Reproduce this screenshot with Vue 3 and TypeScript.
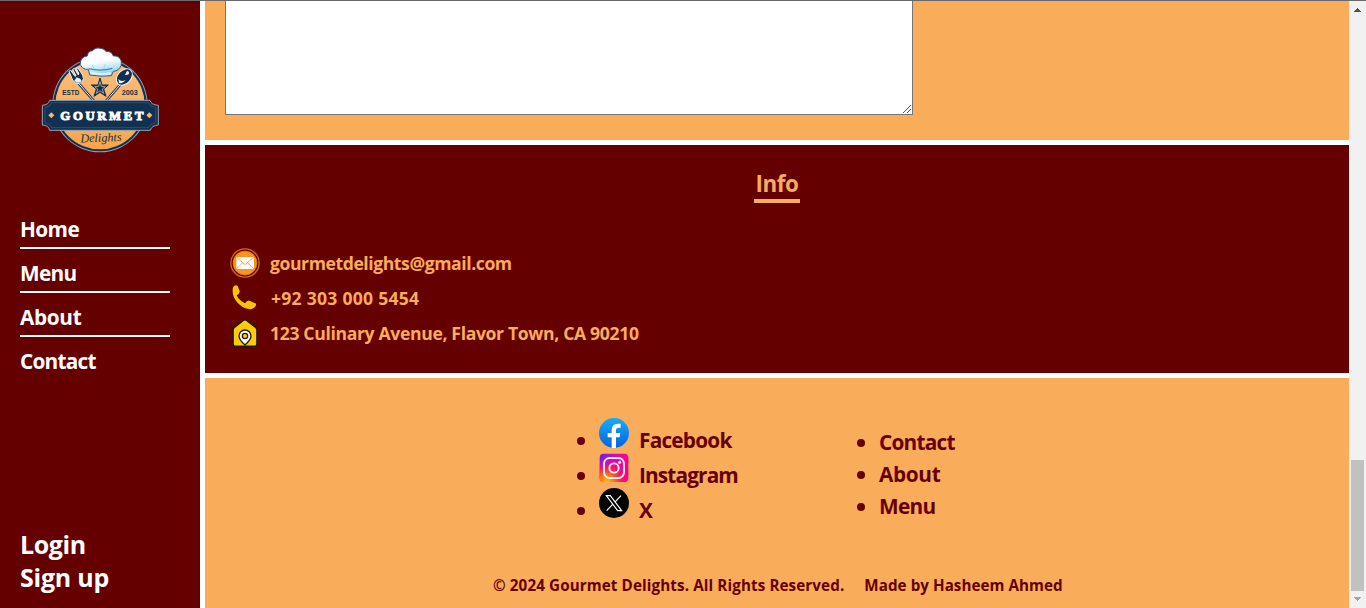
<script setup lang="ts">
interface FooterLink {
  label: string
  icon?: 'facebook' | 'instagram' | 'x'
}

const navItems: string[] = ['Home', 'Menu', 'About', 'Contact']
const socials: FooterLink[] = [
  { label: 'Facebook', icon: 'facebook' },
  { label: 'Instagram', icon: 'instagram' },
  { label: 'X', icon: 'x' },
]
const siteLinks: FooterLink[] = [{ label: 'Contact' }, { label: 'About' }, { label: 'Menu' }]
</script>

<template>
  <div class="page">
    <aside class="sidebar">
      <svg class="logo" viewBox="0 0 390 360" role="img" aria-label="Gourmet Delights">
        <defs>
          <linearGradient id="plate" x1="0" y1="0" x2="0" y2="1">
            <stop offset="0" stop-color="#fbbd7c" />
            <stop offset="1" stop-color="#f8a54c" />
          </linearGradient>
          <linearGradient id="hat" x1="0" y1="0" x2="0.25" y2="1">
            <stop offset="0.55" stop-color="#ffffff" />
            <stop offset="1" stop-color="#8fd3f0" />
          </linearGradient>
        </defs>
        <circle cx="195" cy="194" r="143" fill="#8fa3b5" />
        <circle cx="195" cy="194" r="140" fill="#12304f" />
        <circle cx="195" cy="194" r="134" fill="url(#plate)" />
        <g stroke="#12304f" stroke-width="8" stroke-linecap="round">
          <path d="M131 130 L176 182 M259 130 L214 182" />
          <path d="M132 131 L176 182 M258 131 L214 182" stroke="#eef3f7" stroke-width="3" />
        </g>
        <path d="M102 94 L107 91 L120 109 L123 107 L113 88 L118 85 L129 104 L132 102 L124 85 L129 84 L143 105 Q148 116 142 125 Q134 136 122 129 Q111 122 109 111Z" fill="#12304f" stroke="#f3f6f9" stroke-width="3" />
        <path d="M125 112 Q138 115 140 124 Q130 134 118 122Z" fill="#e9f1f7" />
        <ellipse cx="268" cy="111" rx="20" ry="28" transform="rotate(43 268 111)" fill="#12304f" stroke="#f3f6f9" stroke-width="3" />
        <path d="M250 117 Q258 127 272 120 Q262 134 252 128Z" fill="#eef3f7" />
        <path d="M276 93 Q285 94 281 103 Q274 107 270 104Z" fill="#eef3f7" />
        <path d="M142 83 Q132 75 137 63 Q142 49 157 48 Q158 33 173 32 Q181 21 196 25 Q208 26 213 34 Q231 34 235 48 Q252 46 258 61 Q263 78 249 89 Q244 94 235 94 L229 107 Q197 111 164 105 L160 88 Q151 90 142 83Z" fill="url(#hat)" stroke="#2b5f86" stroke-width="3" />
        <path d="M161 86 Q197 95 232 85" fill="none" stroke="#3c90bb" stroke-width="4" />
        <path d="M172 74 L177 86 M211 73 L206 87" fill="none" stroke="#9fd6ee" stroke-width="3" />
        <path d="M165 94 Q198 103 228 95 L226 104 Q196 108 167 103Z" fill="#d8f2fc" />
        <path d="M195 114 L201 135 L220 135 L206 147 L213 169 L195 157 L177 169 L184 147 L169 135 L189 135Z" fill="#12304f" stroke="#12304f" stroke-width="3" />
        <path d="M195 125 L199 139 L211 140 L202 147 L206 160 L195 152 L184 160 L188 147 L179 140 L191 139Z" fill="#12304f" stroke="#e8d5bd" stroke-width="2" />
        <text x="82" y="165" class="mark-small" textLength="51" lengthAdjust="spacingAndGlyphs">ESTD</text>
        <text x="260" y="165" class="mark-small" textLength="48" lengthAdjust="spacingAndGlyphs">2003</text>
        <path d="M44 181 H345 Q348 194 370 196 V255 Q350 256 346 271 H44 Q41 256 22 255 V196 Q41 194 44 181Z" fill="#12304f" stroke="#93a6b8" stroke-width="3" />
        <path d="M50 188 H340 Q345 201 362 203 V248 Q345 250 340 263 H50 Q46 250 30 248 V203 Q46 201 50 188Z" fill="none" stroke="#4d6c8b" stroke-width="1.5" />
        <text x="76" y="240" class="mark-name" textLength="249">GOURMET</text>
        <path d="M49 217 L58 226 L49 235 L40 226Z M343 217 L352 226 L343 235 L334 226Z" fill="#f9b66f" />
        <text x="136" y="305" class="mark-script" textLength="124" lengthAdjust="spacingAndGlyphs" transform="rotate(-2 198 300)">Delights</text>
      </svg>
      <nav class="nav">
        <a v-for="item in navItems" :key="item" class="nav-link"><span :class="['t-' + item.toLowerCase()]">{{ item }}</span></a>
      </nav>
      <div class="account">
        <a class="login">Login</a>
        <a class="signup">Sign up</a>
      </div>
    </aside>

    <main class="content">
      <section class="message">
        <div class="textarea">
          <svg class="grip" viewBox="0 0 10 10" shape-rendering="crispEdges">
            <path d="M1 8h1v1h-1z M2 7h1v1h-1z M3 6h1v1h-1z M4 5h1v1h-1z M5 4h1v1h-1z M6 3h1v1h-1z M7 2h1v1h-1z M8 1h1v1h-1z M5 8h1v1h-1z M6 7h1v1h-1z M7 6h1v1h-1z M8 5h1v1h-1z" fill="#55555a" />
          </svg>
        </div>
      </section>

      <section class="info">
        <h2 class="info-title"><span>Info</span></h2>
        <div class="contact-row">
          <svg class="icon" viewBox="0 0 90 90">
            <circle cx="45" cy="45" r="42.5" fill="#650000" stroke="#c97016" stroke-width="4" />
            <circle cx="45" cy="45" r="36" fill="#f7941d" stroke="#d97a16" stroke-width="2" />
            <rect x="19" y="27" width="53" height="36" rx="2" fill="#fff" />
            <path d="M20 28 L45 50 L71 28 M20 62 L38 44 M71 62 L52 44" fill="none" stroke="#f7a64a" stroke-width="3" />
          </svg>
          <span class="mail">gourmetdelights@gmail.com</span>
        </div>
        <div class="contact-row">
          <svg class="icon" viewBox="0 0 90 90">
            <path d="M10 11 Q18 4 23 9 L29 24 Q30 31 20 37 Q26 51 45 61 Q52 51 58 53 L76 61 Q81 65 74 73 Q68 80 57 78 Q34 74 20 56 Q7 39 8 22 Q8 14 10 11Z" fill="#ffc107" />
          </svg>
          <span class="phone">+92 303 000 5454</span>
        </div>
        <div class="contact-row">
          <svg class="icon" viewBox="0 0 90 90">
            <path d="M40 7 Q45 3 50 7 L77 28 Q81 31 81 36 V78 Q81 85 74 85 H16 Q9 85 9 78 V36 Q9 31 13 28Z" fill="#ffcb05" stroke="#251710" stroke-width="5" />
            <path d="M45 81 Q27 65 27 54 A18 18 0 0 1 63 54 Q63 65 45 81Z" fill="#fff" stroke="#251710" stroke-width="4" />
            <circle cx="45" cy="54" r="8" fill="#ffcb05" stroke="#251710" stroke-width="4" />
          </svg>
          <span class="address">123 Culinary Avenue, Flavor Town, CA 90210</span>
        </div>
      </section>

      <footer class="footer">
        <div class="footer-lists">
          <ul class="list socials">
            <li v-for="link in socials" :key="link.label">
              <i class="dot"></i>
              <svg v-if="link.icon === 'facebook'" class="icon" viewBox="0 0 90 90">
                <defs>
                  <linearGradient id="fb" x1="0" y1="0" x2="0" y2="1">
                    <stop offset="0" stop-color="#18acfe" />
                    <stop offset="1" stop-color="#0163e0" />
                  </linearGradient>
                </defs>
                <circle cx="45" cy="45" r="45" fill="url(#fb)" />
                <path d="M38 90 V58 H26 V45 H38 V36 Q38 17 57 17 H65 V29 H59 Q51 29 51 37 V45 H64 L62 58 H51 V90Z" fill="#fff" />
              </svg>
              <svg v-else-if="link.icon === 'instagram'" class="icon" viewBox="0 0 90 90">
                <defs>
                  <linearGradient id="ig" x1="0" y1="0" x2="1" y2="0.55">
                    <stop offset="0" stop-color="#6a20ed" />
                    <stop offset="0.5" stop-color="#e900b5" />
                    <stop offset="1" stop-color="#ff0080" />
                  </linearGradient>
                  <radialGradient id="ig-warm" cx="0.25" cy="1" r="0.8">
                    <stop offset="0" stop-color="#ffc400" />
                    <stop offset="0.35" stop-color="#ff6a1a" />
                    <stop offset="0.7" stop-color="#ff1a55" stop-opacity="0.65" />
                    <stop offset="1" stop-color="#ff0090" stop-opacity="0" />
                  </radialGradient>
                </defs>
                <rect x="2" y="2" width="86" height="85" rx="12" fill="url(#ig)" />
                <rect x="2" y="2" width="86" height="85" rx="12" fill="url(#ig-warm)" />
                <rect x="15" y="15" width="60" height="60" rx="17" fill="none" stroke="#fff" stroke-width="5.5" />
                <circle cx="45" cy="45" r="14" fill="none" stroke="#fff" stroke-width="5.5" />
                <circle cx="62" cy="28" r="4.5" fill="#fff" />
              </svg>
              <svg v-else class="icon" viewBox="0 0 90 90">
                <circle cx="45" cy="45" r="45" fill="#000" />
                <path d="M22 23 H34 L68 68 H56Z M66 23 L47 43 M41 49 L23 68" fill="none" stroke="#fff" stroke-width="3.5" />
              </svg>
              <span :class="['name', 's-' + link.label.toLowerCase()]">{{ link.label }}</span>
            </li>
          </ul>
          <ul class="list pages">
            <li v-for="link in siteLinks" :key="link.label">
              <i class="dot"></i><span :class="['t-' + link.label.toLowerCase()]">{{ link.label }}</span>
            </li>
          </ul>
        </div>
        <p class="legal">
          <span class="rights">© 2024 Gourmet Delights. All Rights Reserved.</span>
          <span class="author">Made by Hasheem Ahmed</span>
        </p>
      </footer>
    </main>

    <div class="scrollbar">
      <svg class="arrow" viewBox="0 0 7 4" shape-rendering="crispEdges"><path d="M3 0h1v1h1v1h1v1h1v1H0V3h1V2h1V1h1z" fill="#505050" /></svg>
      <div class="thumb"></div>
      <svg class="arrow" viewBox="0 0 7 4" shape-rendering="crispEdges"><path d="M0 0h7v1H6v1H5v1H4v1H3V3H2V2H1V1H0z" fill="#a3a3a3" /></svg>
    </div>
  </div>
</template>

<style>
body {
  margin: 0;
  overflow: hidden;
}
</style>

<style scoped>
.page {
  display: flex;
  box-sizing: border-box;
  width: 1366px;
  height: 608px;
  border-top: 1px solid #6b686b;
  background: #fff;
  font-family: 'Open Sans', 'Noto Sans', sans-serif;
  font-weight: 700;
  white-space: nowrap;
  overflow: hidden;
}

.sidebar {
  display: flex;
  flex-direction: column;
  box-sizing: border-box;
  width: 200px;
  margin-right: 5px;
  padding: 39px 30px 14px 20px;
  background: #650000;
  color: #fff;
}
.logo {
  flex: none;
  width: 130px;
  height: 120px;
  margin-left: 15px;
}
.mark-small {
  font: 700 20px 'Liberation Sans', sans-serif;
  fill: #12304f;
}
.mark-name {
  font: 700 38px 'Liberation Serif', serif;
  fill: #fff;
  stroke: #fff;
  stroke-width: 3px;
}
.mark-script {
  font: italic 400 36px 'Liberation Serif', serif;
  fill: #12304f;
}
.nav {
  display: flex;
  flex-direction: column;
  margin-top: 48px;
}
.nav-link {
  box-sizing: border-box;
  height: 44px;
  padding-top: 9px;
  border-bottom: 2px solid #fff;
  font-size: 20.8px;
  line-height: 30px;
}
.nav-link:first-child {
  height: 41px;
  padding-top: 6px;
}
.nav-link:last-child {
  border-bottom: 0;
}
.t-home {
  letter-spacing: -0.6px;
}
.t-menu {
  letter-spacing: -0.65px;
}
.t-about {
  letter-spacing: -0.35px;
}
.t-contact {
  letter-spacing: -0.77px;
}
.account {
  display: flex;
  flex-direction: column;
  margin-top: auto;
  font-size: 25px;
  line-height: 33px;
}
.login {
  letter-spacing: -0.4px;
}
.signup {
  letter-spacing: -0.25px;
}

.content {
  display: flex;
  flex-direction: column;
  gap: 5px;
  width: 1144px;
}
.message {
  box-sizing: border-box;
  height: 139px;
  padding: 0 20px;
  background: #f9ac5a;
}
.textarea {
  display: flex;
  align-items: flex-end;
  justify-content: flex-end;
  box-sizing: border-box;
  width: 688px;
  height: 114px;
  border: 1px solid #767676;
  border-top: 0;
  border-radius: 0 0 1px 1px;
  background: #fff;
}
.grip {
  width: 10px;
  height: 10px;
}

.info {
  box-sizing: border-box;
  height: 228px;
  padding: 20px 25px;
  background: #650000;
  color: #f9ac5a;
}
.info-title {
  display: flex;
  justify-content: center;
  margin: 0 0 42px;
  font-size: 22.4px;
  line-height: 34px;
  letter-spacing: -0.4px;
}
.info-title span {
  box-sizing: border-box;
  width: 46px;
  height: 38px;
  padding-top: 2px;
  border-bottom: 4px solid #f9ac5a;
  text-align: center;
}
.contact-row {
  display: flex;
  align-items: center;
  gap: 10px;
  height: 35px;
  font-size: 17.6px;
  line-height: 33px;
}
.contact-row span {
  padding-top: 2px;
}
.mail {
  letter-spacing: -0.43px;
}
.phone {
  margin-left: 1px;
  letter-spacing: 0.24px;
}
.address {
  letter-spacing: -0.35px;
}
.icon {
  flex: none;
  width: 30px;
  height: 30px;
}

.footer {
  box-sizing: border-box;
  height: 230px;
  padding-top: 37px;
  background: #f9ac5a;
  color: #650000;
}
.footer-lists {
  display: flex;
  padding-left: 372px;
}
.list {
  display: flex;
  flex-direction: column;
  width: 280px;
  margin: 0;
  padding: 0;
  list-style: none;
  font-size: 20.8px;
}
.list li {
  display: flex;
  align-items: center;
}
.socials li {
  height: 35px;
}
.socials .icon {
  margin: 0 10px 0 14px;
}
.socials .dot,
.socials .name {
  margin-top: 16px;
}
.socials .name {
  line-height: 19px;
}
.s-facebook {
  letter-spacing: -0.78px;
}
.s-instagram {
  letter-spacing: -0.86px;
}
.pages {
  padding-top: 11px;
}
.pages li {
  gap: 14px;
  height: 32px;
}
.pages .dot {
  margin-top: 2px;
}
.dot {
  flex: none;
  width: 8px;
  height: 8px;
  border-radius: 50%;
  background: #650000;
}
.legal {
  display: flex;
  gap: 20px;
  margin: 52px 0 0 288px;
  font-size: 15.2px;
  line-height: 22px;
}
.rights {
  letter-spacing: 0.11px;
}
.author {
  letter-spacing: 0.05px;
}

.scrollbar {
  display: flex;
  flex-direction: column;
  align-items: center;
  justify-content: space-between;
  box-sizing: border-box;
  width: 17px;
  padding: 7px 0;
  background: #f1f1f1;
}
.arrow {
  width: 7px;
  height: 4px;
}
.thumb {
  width: 13px;
  height: 131px;
  margin: auto 0 6px;
  background: #c1c1c1;
}
</style>
